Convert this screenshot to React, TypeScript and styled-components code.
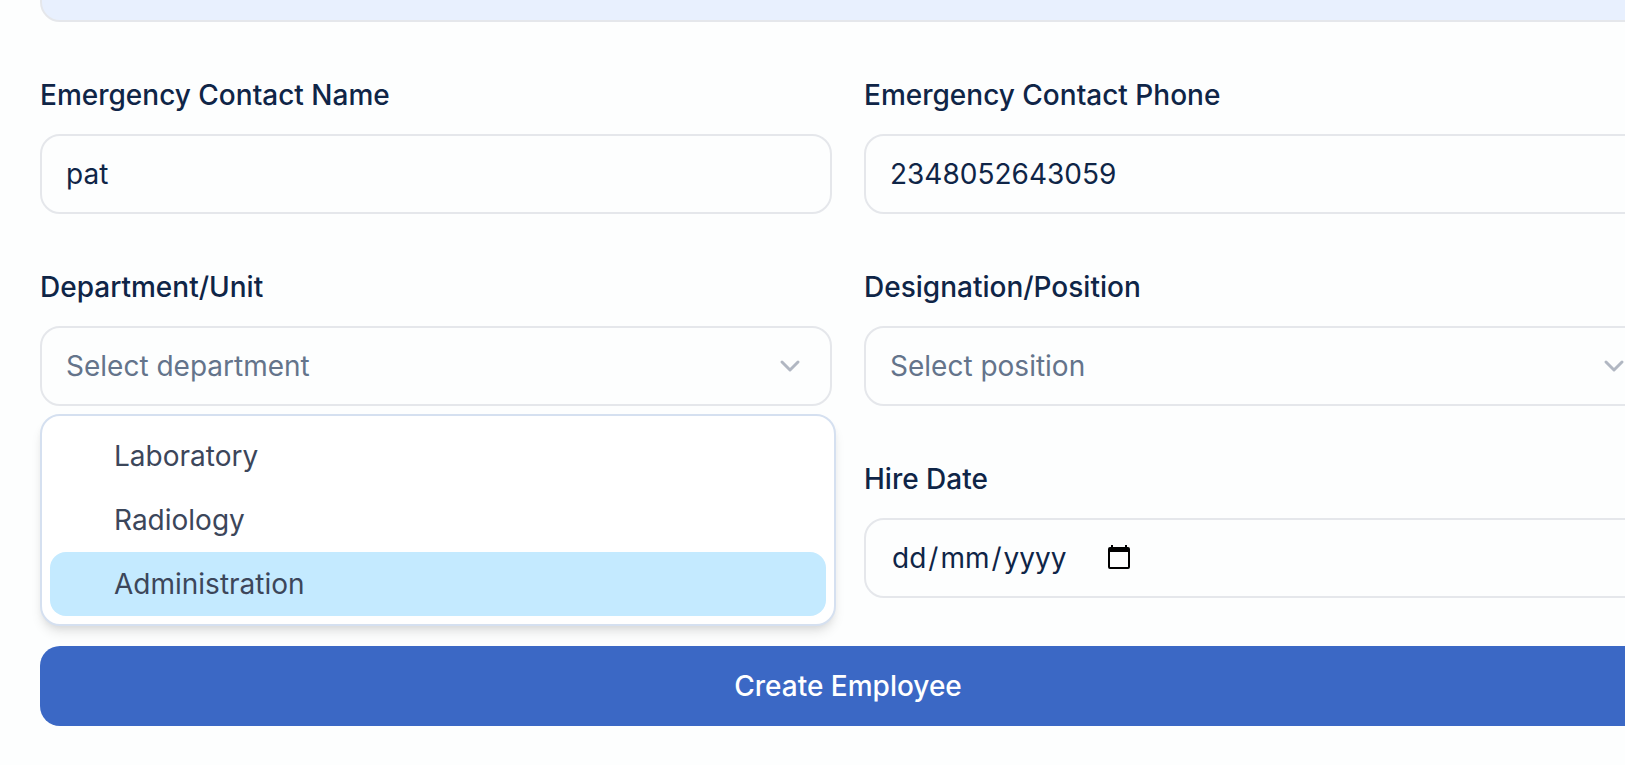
import React, { useState } from 'react';
import styled, { createGlobalStyle } from 'styled-components';

const GlobalStyle = createGlobalStyle`
  *, *::before, *::after { box-sizing: border-box; }
  body {
    margin: 0;
    background: #fdfefe;
    color: #0f2547;
    font-family: Inter, "Liberation Sans", sans-serif;
    font-size: 32px;
    line-height: 48px;
  }
  input, select, textarea, button { font: inherit; color: inherit; }
`;

const Page = styled.main`
  min-height: 100vh;
  overflow: hidden;
  padding: 0 0 40px 40px;
`;

const Form = styled.form`
  display: grid;
  grid-template-columns: repeat(2, minmax(0, 1fr));
  gap: 48px 32px;
  margin: -58px -31px 0 0;
`;

const Field = styled.div<{ $column?: number }>`
  position: relative;
  display: flex;
  flex-direction: column;
  gap: 16px;
  grid-column: ${(p) => p.$column ?? 'auto'};
`;

const LabelLine = styled.div`
  height: 48px;
`;

const Label = styled.label`
  font-size: 28px;
  font-weight: 500;
`;

const Control = styled.input<{ $filled?: boolean; $wide?: boolean }>`
  width: 100%;
  height: 80px;
  padding: 0 24px;
  border: 2px solid #e5e7eb;
  border-radius: 20px;
  background: ${(p) => (p.$filled ? '#e8f0fe' : 'transparent')};
  grid-column: ${(p) => (p.$wide ? '1 / -1' : 'auto')};
  font-size: 28px;
  line-height: 40px;
  outline: none;
`;

const SelectBox = styled.div`
  display: grid;
  grid-template-columns: 1fr auto;
  align-items: center;
  height: 80px;
  border: 2px solid #e5e7eb;
  border-radius: 20px;
`;

const NativeSelect = styled.select`
  grid-area: 1 / 1 / 2 / 3;
  width: 100%;
  height: 76px;
  padding: 0 72px 0 24px;
  border: 0;
  appearance: none;
  background: transparent;
  color: #64748b;
  font-size: 28px;
  outline: none;
`;

const Chevron = styled.svg`
  grid-area: 1 / 2;
  width: 32px;
  height: 32px;
  margin-right: 24px;
  pointer-events: none;
  color: #b1b7c2;
`;

const Menu = styled.ul`
  position: absolute;
  z-index: 2;
  top: calc(100% + 8px);
  left: 0;
  width: calc(100% + 4px);
  margin: 0;
  padding: 8px;
  list-style: none;
  background: #fff;
  border: 2px solid #d5e0f0;
  border-radius: 20px;
  box-shadow: 0 8px 12px -2px rgb(0 0 0 / 0.1), 0 4px 8px -4px rgb(0 0 0 / 0.1);
`;

const Option = styled.li<{ $active: boolean }>`
  padding: 12px 16px 12px 64px;
  border-radius: 16px;
  background: ${(p) => (p.$active ? '#c4eaff' : 'transparent')};
  color: #3c465a;
  font-size: 28px;
  line-height: 40px;
  cursor: default;
`;

const DateBox = styled.div`
  display: flex;
  align-items: center;
  height: 80px;
  padding: 0 24px;
  border: 2px solid #e5e7eb;
  border-radius: 20px;
  font-size: 28px;
  line-height: 40px;
`;

const DatePart = styled.input`
  field-sizing: content;
  height: 40px;
  padding: 0 2px;
  border: 0;
  background: transparent;
  outline: none;
  &::placeholder { color: inherit; opacity: 1; }
`;

const PickerButton = styled.button`
  display: flex;
  margin-left: 36px;
  padding: 0;
  border: 0;
  background: transparent;
  color: #000;
`;

const Submit = styled.button`
  grid-column: 1 / -1;
  height: 80px;
  border: 0;
  border-radius: 20px;
  background: #3b68c5;
  color: #fff;
  font-size: 28px;
  line-height: 40px;
  font-weight: 500;
`;

const departments = ['Laboratory', 'Radiology', 'Administration'];

function ChevronDown() {
  return (
    <Chevron viewBox="0 0 32 32" fill="none" stroke="currentColor" strokeWidth="3" strokeLinecap="round" strokeLinejoin="round" aria-hidden="true">
      <path d="M8 12l8 8 8-8" />
    </Chevron>
  );
}

function Dropdown({ id, placeholder, options = [] }: { id: string; placeholder: string; options?: string[] }) {
  return (
    <SelectBox>
      <NativeSelect id={id} defaultValue="">
        <option value="">{placeholder}</option>
        {options.map((o) => <option key={o}>{o}</option>)}
      </NativeSelect>
      <ChevronDown />
    </SelectBox>
  );
}

export default function App() {
  const [active, setActive] = useState('Administration');
  return (
    <Page>
      <GlobalStyle />
      <Form onSubmit={(e) => e.preventDefault()}>
        <Control $filled $wide aria-label="Address" />
        <Field>
          <LabelLine><Label htmlFor="contact-name">Emergency Contact Name</Label></LabelLine>
          <Control id="contact-name" defaultValue="pat" />
        </Field>
        <Field>
          <LabelLine><Label htmlFor="contact-phone">Emergency Contact Phone</Label></LabelLine>
          <Control id="contact-phone" type="tel" defaultValue="2348052643059" />
        </Field>
        <Field>
          <LabelLine><Label htmlFor="department">Department/Unit</Label></LabelLine>
          <Dropdown id="department" placeholder="Select department" options={departments} />
          <Menu role="listbox" aria-label="Department/Unit">
            {departments.map((d) => (
              <Option key={d} role="option" aria-selected={d === active} $active={d === active} onMouseEnter={() => setActive(d)}>{d}</Option>
            ))}
          </Menu>
        </Field>
        <Field>
          <LabelLine><Label htmlFor="position">Designation/Position</Label></LabelLine>
          <Dropdown id="position" placeholder="Select position" />
        </Field>
        <Field $column={2}>
          <LabelLine><Label id="hire-date-label" htmlFor="hire-day">Hire Date</Label></LabelLine>
          <DateBox role="group" aria-labelledby="hire-date-label">
            <DatePart id="hire-day" placeholder="dd" maxLength={2} inputMode="numeric" />
            <span>/</span>
            <DatePart aria-label="Month" placeholder="mm" maxLength={2} inputMode="numeric" />
            <span>/</span>
            <DatePart aria-label="Year" placeholder="yyyy" maxLength={4} inputMode="numeric" />
            <PickerButton type="button" aria-label="Open calendar">
              <svg width="28" height="28" viewBox="0 0 28 28" aria-hidden="true">
                <path fill="currentColor" fillRule="evenodd" d="M6 1h2v2h12V1h2v2h1q2 0 2 2v18q0 2-2 2H5q-2 0-2-2V5q0-2 2-2h1zM5 8v15h18V8z" />
              </svg>
            </PickerButton>
          </DateBox>
        </Field>
        <Submit type="submit">Create Employee</Submit>
      </Form>
    </Page>
  );
}
